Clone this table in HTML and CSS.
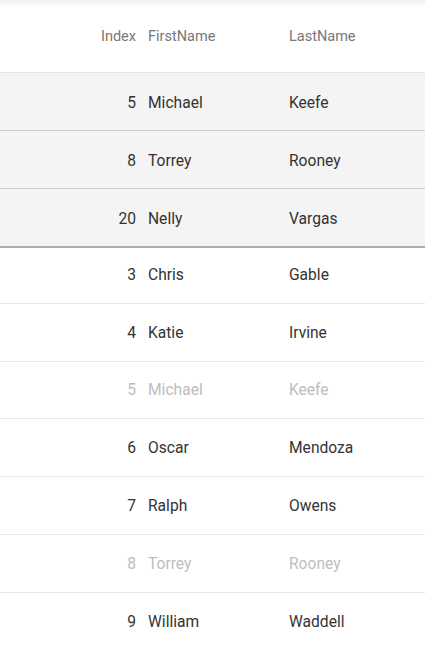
FILE: index.html
```html
<!DOCTYPE html>
<html>
<head>
<meta charset="utf-8">
<link rel="stylesheet" href="styles.css">
</head>
<body>
<div class="table">
  <div class="row head">
    <div class="cell idx">Index</div>
    <div class="cell">FirstName</div>
    <div class="cell">LastName</div>
  </div>
  <div class="pinned">
    <div class="row"><div class="cell idx">5</div><div class="cell">Michael</div><div class="cell">Keefe</div></div>
    <div class="row"><div class="cell idx">8</div><div class="cell">Torrey</div><div class="cell">Rooney</div></div>
    <div class="row"><div class="cell idx">20</div><div class="cell">Nelly</div><div class="cell">Vargas</div></div>
  </div>
  <div class="body">
    <div class="row"><div class="cell idx">3</div><div class="cell">Chris</div><div class="cell">Gable</div></div>
    <div class="row"><div class="cell idx">4</div><div class="cell">Katie</div><div class="cell">Irvine</div></div>
    <div class="row faded"><div class="cell idx">5</div><div class="cell">Michael</div><div class="cell">Keefe</div></div>
    <div class="row"><div class="cell idx">6</div><div class="cell">Oscar</div><div class="cell">Mendoza</div></div>
    <div class="row"><div class="cell idx">7</div><div class="cell">Ralph</div><div class="cell">Owens</div></div>
    <div class="row faded"><div class="cell idx">8</div><div class="cell">Torrey</div><div class="cell">Rooney</div></div>
    <div class="row"><div class="cell idx">9</div><div class="cell">William</div><div class="cell">Waddell</div></div>
  </div>
</div>
</body>
</html>
```
FILE: styles.css
```css
html, body {
  margin: 0;
  padding: 0;
  background: #fff;
}
body {
  font-family: Roboto, "Liberation Sans", sans-serif;
  color: #333;
  overflow: hidden;
  height: 650px;
}
.table {
  width: 425px;
}
.row {
  display: grid;
  grid-template-columns: 142px 141px 1fr;
  align-items: center;
  box-sizing: border-box;
  height: 57.8px;
  border-bottom: 1px solid #e6e6e6;
  font-size: 15.6px;
  padding-top: 1px;
}
.cell {
  padding: 0 6px;
  white-space: nowrap;
}
.idx {
  text-align: right;
}
.head {
  height: 73px;
  padding-top: 0;
  font-size: 14.5px;
  color: #777;
  border-bottom: 1px solid #e4e4e4;
  background: linear-gradient(#efefef, #fff 6px);
}
.pinned {
  position: relative;
  z-index: 1;
  background: #f4f4f4;
  border-bottom: 2px solid #aeaeae;
}
.pinned .row {
  height: 58px;
  padding-top: 3px;
  border-bottom-color: #cdcdcd;
}
.pinned .row:last-child {
  border-bottom: none;
  height: 57px;
}
.body {
  margin-top: -2px;
}
.faded {
  color: #bdbdbd;
}
```
